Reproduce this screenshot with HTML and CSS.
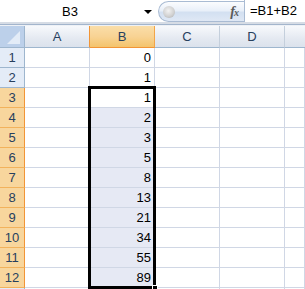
FILE: index.html
```html
<!DOCTYPE html>
<html>
<head>
<meta charset="utf-8">
<link rel="stylesheet" href="styles.css">
</head>
<body>
<div class="top">
  <div class="namebox"><span class="name">B3</span><span class="arrow"></span></div>
  <div class="fxarea">
    <div class="pill"><span class="knob"></span><span class="fx">f<span class="fxx">x</span></span></div>
  </div>
  <div class="formula">=B1+B2</div>
</div>
<div class="band"></div>
<div class="sheet">
  <div class="corner"><svg width="24" height="21" viewBox="0 0 24 21"><polygon points="20,5 20,18 7,18" fill="#e3ecf7"/></svg></div>
  <div class="ch pre">A</div><div class="ch on">B</div><div class="ch">C</div><div class="ch">D</div><div class="ch last"></div>

  <div class="rh">1</div><div class="c"></div><div class="c num">0</div><div class="c"></div><div class="c"></div><div class="c"></div>
  <div class="rh">2</div><div class="c"></div><div class="c num">1</div><div class="c"></div><div class="c"></div><div class="c"></div>
  <div class="rh on">3</div><div class="c"></div><div class="c num">1</div><div class="c"></div><div class="c"></div><div class="c"></div>
  <div class="rh on">4</div><div class="c"></div><div class="c num sel">2</div><div class="c"></div><div class="c"></div><div class="c"></div>
  <div class="rh on">5</div><div class="c"></div><div class="c num sel">3</div><div class="c"></div><div class="c"></div><div class="c"></div>
  <div class="rh on">6</div><div class="c"></div><div class="c num sel">5</div><div class="c"></div><div class="c"></div><div class="c"></div>
  <div class="rh on">7</div><div class="c"></div><div class="c num sel">8</div><div class="c"></div><div class="c"></div><div class="c"></div>
  <div class="rh on">8</div><div class="c"></div><div class="c num sel">13</div><div class="c"></div><div class="c"></div><div class="c"></div>
  <div class="rh on">9</div><div class="c"></div><div class="c num sel">21</div><div class="c"></div><div class="c"></div><div class="c"></div>
  <div class="rh on">10</div><div class="c"></div><div class="c num sel">34</div><div class="c"></div><div class="c"></div><div class="c"></div>
  <div class="rh on">11</div><div class="c"></div><div class="c num sel">55</div><div class="c"></div><div class="c"></div><div class="c"></div>
  <div class="rh on">12</div><div class="c"></div><div class="c num sel">89</div><div class="c"></div><div class="c"></div><div class="c"></div>
  <div class="rh"></div><div class="c"></div><div class="c"></div><div class="c"></div><div class="c"></div><div class="c"></div>
</div>
<div class="selection"><span class="handle"></span></div>
</body>
</html>
```
FILE: styles.css
```css
html, body {
  margin: 0;
  padding: 0;
  width: 305px;
  height: 289px;
  overflow: hidden;
  background: #ffffff;
  font-family: "Liberation Sans", Arial, sans-serif;
}
* { box-sizing: border-box; }

.top {
  display: flex;
  height: 22px;
  background: #ffffff;
}
.namebox {
  width: 156px;
  display: flex;
  align-items: center;
  position: relative;
}
.name {
  width: 140px;
  text-align: center;
  font-size: 13px;
  color: #000;
}
.arrow {
  width: 0;
  height: 0;
  margin-left: 4px;
  border-left: 4px solid transparent;
  border-right: 4px solid transparent;
  border-top: 4px solid #000;
  margin-top: 2px;
}
.fxarea {
  width: 88px;
  padding: 1px 0 0 2px;
}
.pill {
  height: 21px;
  border: 1px solid #a9bbd3;
  border-right: none;
  border-radius: 11px 0 0 11px;
  background: linear-gradient(#fbfcfe 0%, #e9f0f9 45%, #d3e0f1 55%, #dfe8f5 100%);
  display: flex;
  align-items: center;
  justify-content: space-between;
  padding: 0 6px 0 4px;
}
.knob {
  width: 12px;
  height: 12px;
  border-radius: 50%;
  background: radial-gradient(circle at 45% 40%, #f2f2f2 0%, #d2d2d2 55%, #a9a9a9 100%);
}
.fx {
  font-family: "Liberation Serif", "Times New Roman", serif;
  font-style: italic;
  font-size: 14px;
  color: #5a5a5a;
  font-weight: bold;
  letter-spacing: -1px;
}
.fxx {
  font-size: 10px;
}
.formula {
  flex: 1;
  border-left: 1px solid #a9bbd3;
  padding-left: 5px;
  font-size: 13px;
  line-height: 22px;
  color: #000;
}
.band {
  height: 4px;
  background: linear-gradient(#d6dce5 0, #d6dce5 2px, #a3b5cc 2px, #a3b5cc 3px, #eef1f6 3px);
}

.sheet {
  display: grid;
  grid-template-columns: 25px 65px 65px 65px 65px 1fr;
  grid-template-rows: 22px repeat(13, 20px);
  font-size: 13px;
}
.corner {
  background: #bcd0ea;
  border-right: 1px solid #9eb6ce;
  border-bottom: 1px solid #9eb6ce;
}
.corner svg { display: block; }
.ch {
  background: linear-gradient(#f7f9fc, #e4e9f1 60%, #dbe2ec);
  border-right: 1px solid #c4cfdc;
  border-bottom: 1px solid #9eb6ce;
  text-align: center;
  line-height: 21px;
  color: #27405e;
}
.ch.pre { border-right-color: #f29536; }
.ch.on {
  background: linear-gradient(#fadea9, #f8d394 50%, #f4c46c);
  border-bottom-color: #f29536;
  border-right-color: #f2a548;
}
.ch.last { border-right: none; }
.rh {
  background: #e4ecf7;
  border-right: 1px solid #9eb6ce;
  border-bottom: 1px solid #9eb6ce;
  text-align: center;
  line-height: 19px;
  color: #27405e;
}
.rh.on {
  background: #f8d69d;
  border-right-color: #f29536;
  border-bottom-color: #f2b25c;
}
.c {
  border-right: 1px solid #d0d7e5;
  border-bottom: 1px solid #d0d7e5;
  background: #ffffff;
  line-height: 19px;
  color: #000;
}
.num {
  text-align: right;
  padding-right: 3px;
}
.c.sel { background: #e6e9f4; }

.selection {
  position: absolute;
  left: 88px;
  top: 86px;
  width: 68px;
  height: 203px;
  border: 3px solid #000;
}
.handle {
  position: absolute;
  right: -5px;
  bottom: -5px;
  width: 6px;
  height: 6px;
  background: #000;
  border: 1px solid #fff;
}
```
